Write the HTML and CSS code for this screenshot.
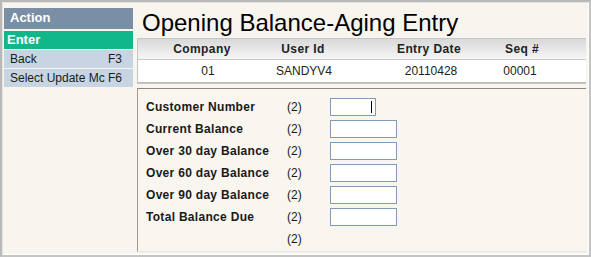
FILE: index.html
```html
<!DOCTYPE html>
<html>
<head>
<meta charset="utf-8">
<link rel="stylesheet" href="styles.css">
</head>
<body>
<div class="frame">
  <aside class="sidebar">
    <div class="side-head">Action</div>
    <div class="side-item active">Enter</div>
    <div class="side-item"><span class="lbl">Back</span><span class="key">F3</span></div>
    <div class="side-item"><span class="lbl">Select Update Mc</span><span class="key">F6</span></div>
  </aside>
  <main class="main">
    <h1 class="title">Opening Balance-Aging Entry</h1>
    <div class="info">
      <div class="info-row info-head">
        <span class="c1">Company</span>
        <span class="c2">User Id</span>
        <span class="c3">Entry Date</span>
        <span class="c4">Seq #</span>
      </div>
      <div class="info-row info-data">
        <span class="c1">01</span>
        <span class="c2">SANDYV4</span>
        <span class="c3">20110428</span>
        <span class="c4">00001</span>
      </div>
    </div>
    <div class="form">
      <div class="frow"><span class="flabel">Customer Number</span><span class="fnum">(2)</span><span class="input short"><span class="caret"></span></span></div>
      <div class="frow"><span class="flabel">Current Balance</span><span class="fnum">(2)</span><span class="input"></span></div>
      <div class="frow"><span class="flabel">Over 30 day Balance</span><span class="fnum">(2)</span><span class="input"></span></div>
      <div class="frow"><span class="flabel">Over 60 day Balance</span><span class="fnum">(2)</span><span class="input"></span></div>
      <div class="frow"><span class="flabel">Over 90 day Balance</span><span class="fnum">(2)</span><span class="input"></span></div>
      <div class="frow"><span class="flabel">Total Balance Due</span><span class="fnum">(2)</span><span class="input"></span></div>
      <div class="frow"><span class="flabel"></span><span class="fnum">(2)</span></div>
    </div>
  </main>
</div>
</body>
</html>
```
FILE: styles.css
```css
html, body {
  margin: 0;
  padding: 0;
  background: #f8f4ee;
}
body {
  font-family: "Liberation Sans", Arial, sans-serif;
  color: #000;
}
.frame {
  box-sizing: border-box;
  width: 591px;
  height: 257px;
  border: 2px solid #b9b9b9;
  border-right-color: #c4c4c4;
  border-bottom-color: #c4c4c4;
  box-shadow: inset 1px 1px 0 #e6e2dc, inset -1px -1px 0 #ffffff;
  padding: 6px 3px 3px 2px;
  display: flex;
  gap: 4px;
}
.sidebar {
  width: 129px;
  flex: none;
  display: flex;
  flex-direction: column;
}
.side-head {
  height: 21px;
  background: #7a8ea5;
  color: #fff;
  font-weight: bold;
  font-size: 13px;
  line-height: 19px;
  padding-left: 6px;
  margin-bottom: 2px;
}
.side-item {
  height: 18px;
  background: #c7d5e2;
  color: #1a1a1a;
  font-size: 12px;
  line-height: 18px;
  display: flex;
  padding-left: 6px;
  padding-right: 11px;
  margin-bottom: 1px;
  white-space: nowrap;
}
.side-item.active {
  background: #0fb78b;
  color: #fff;
  font-weight: bold;
  font-size: 13px;
  padding-left: 3px;
}
.side-item .lbl {
  flex: 1;
  overflow: hidden;
  min-width: 0;
}
.side-item .key {
  flex: none;
  margin-left: 3px;
}
.main {
  flex: 1;
  display: flex;
  flex-direction: column;
  min-width: 0;
}
.title {
  margin: 0 0 0 5px;
  font-weight: normal;
  font-size: 24px;
  line-height: 30px;
  height: 30px;
}
.info {
  border: 1px solid #c6c6c6;
  border-right: none;
  background: #fff;
}
.info-row {
  display: flex;
  font-size: 12px;
}
.info-row span {
  width: 80px;
  text-align: center;
  flex: none;
}
.c1 { margin-left: 24px; }
.c2 { margin-left: 21px; }
.c3 { margin-left: 46px; }
.c4 { margin-left: 13px; }
.info-data .c1 { margin-left: 30px; }
.info-data .c2 { margin-left: 16px; }
.info-data .c3 { margin-left: 47px; }
.info-data .c4 { margin-left: 9px; }
.info-head {
  height: 20px;
  line-height: 20px;
  font-weight: bold;
  background: linear-gradient(#d8d8d8, #f6f6f6);
  border-bottom: 1px solid #c9c9c9;
  color: #222;
  letter-spacing: 0.4px;
}
.info-data {
  height: 22px;
  line-height: 22px;
  color: #222;
  border-bottom: 1px solid #bcbcbc;
}
.form {
  margin-top: 4px;
  flex: 1;
  border-top: 1px solid #8f877e;
  border-left: 1px solid #a39a90;
  border-bottom: 1px solid #e8e4de;
  padding: 7px 0 0 8px;
  background: #f9f5ef;
}
.frow {
  display: flex;
  align-items: center;
  height: 22px;
  font-size: 12px;
}
.flabel {
  width: 141px;
  font-weight: bold;
  color: #1a1a1a;
  letter-spacing: 0.3px;
}
.fnum {
  width: 43px;
  color: #1a1a1a;
}
.input {
  box-sizing: border-box;
  width: 67px;
  height: 18px;
  border: 1px solid #7f9db9;
  background: #fff;
  position: relative;
}
.input.short { width: 46px; }
.caret {
  position: absolute;
  right: 3px;
  top: 2px;
  width: 1px;
  height: 12px;
  background: #000;
}
```
